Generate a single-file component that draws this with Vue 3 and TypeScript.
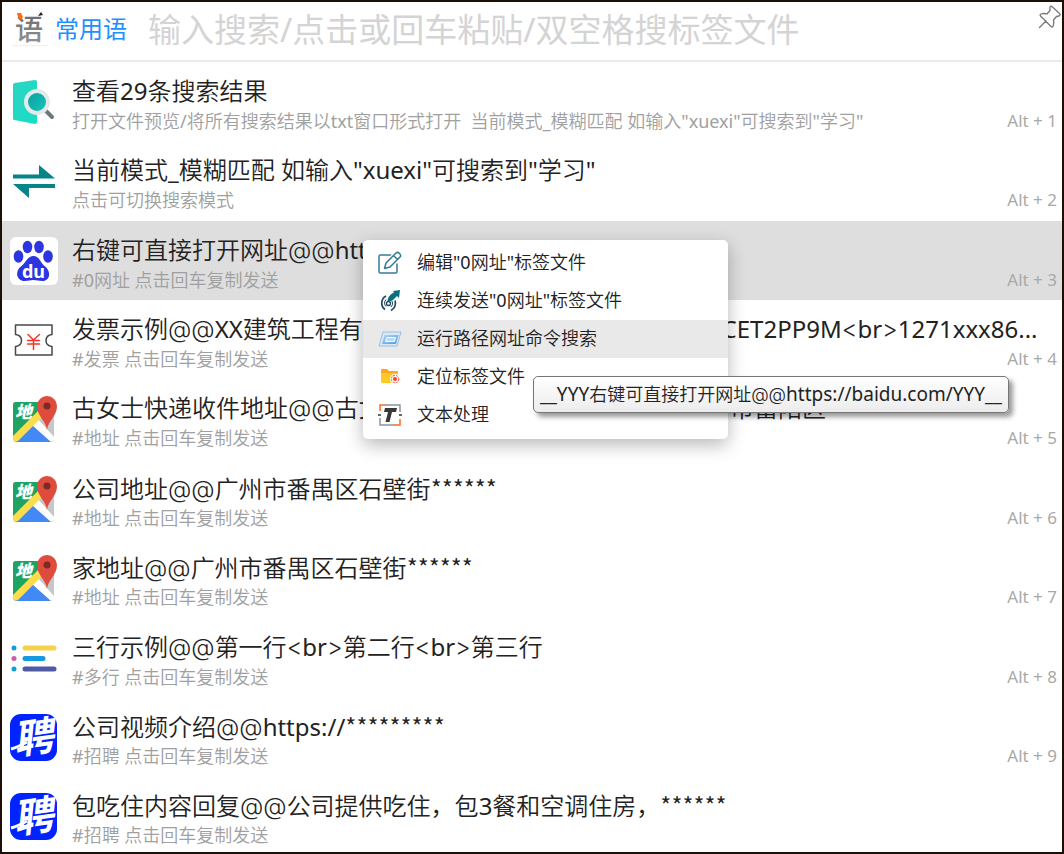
<script setup lang="ts">
import { ref } from 'vue'

type IconName = 'preview' | 'swap' | 'baidu' | 'ticket' | 'map' | 'lines' | 'hire'
interface Phrase {
  icon: IconName
  title: string
  note: string
  key?: number
}
interface Run {
  text: string
  kind: string
}

const query = ref('')
const selected = ref(2)
const activeAction = ref(2)

const phrases: Phrase[] = [
  { icon: 'preview', title: '查看29条搜索结果', note: '打开文件预览/将所有搜索结果以txt窗口形式打开\u00a0 当前模式_模糊匹配 如输入"xuexi"可搜索到"学习"', key: 1 },
  { icon: 'swap', title: '当前模式_模糊匹配 如输入"xuexi"可搜索到"学习"', note: '点击可切换搜索模式', key: 2 },
  { icon: 'baidu', title: '右键可直接打开网址@@https://baidu.com', note: '#0网址 点击回车复制发送', key: 3 },
  { icon: 'ticket', title: '发票示例@@XX建筑工程有限公司<br>税号<br>914401xxx CET2PP9M<br>1271xxx86...', note: '#发票 点击回车复制发送', key: 4 },
  { icon: 'map', title: '古女士快递收件地址@@古女士 138xxxxxxxx 地址浙江省杭州市富阳区', note: '#地址 点击回车复制发送', key: 5 },
  { icon: 'map', title: '公司地址@@广州市番禺区石壁街******', note: '#地址 点击回车复制发送', key: 6 },
  { icon: 'map', title: '家地址@@广州市番禺区石壁街******', note: '#地址 点击回车复制发送', key: 7 },
  { icon: 'lines', title: '三行示例@@第一行<br>第二行<br>第三行', note: '#多行 点击回车复制发送', key: 8 },
  { icon: 'hire', title: '公司视频介绍@@https://*********', note: '#招聘 点击回车复制发送', key: 9 },
  { icon: 'hire', title: '包吃住内容回复@@公司提供吃住，包3餐和空调住房，******', note: '#招聘 点击回车复制发送' },
]

const actions = [
  { icon: 'edit', label: '编辑"0网址"标签文件' },
  { icon: 'send', label: '连续发送"0网址"标签文件' },
  { icon: 'run', label: '运行路径网址命令搜索' },
  { icon: 'folder', label: '定位标签文件' },
  { icon: 'text', label: '文本处理' },
]

const tip = '__YYY右键可直接打开网址@@https://baidu.com/YYY__'

// Han text is set lighter than Latin; separators and masks have their own families.
function runs(text: string): Run[] {
  return text
    .split(/([@<>]+|\*+|[!-);+-;=?A-~]+)/)
    .filter((part) => part.length > 0)
    .map((part) => ({
      text: part,
      kind: /^[@<>]/.test(part) ? 'mark' : part.startsWith('*') ? 'mask' : /^[!-~]/.test(part) ? 'latin' : 'han',
    }))
}
</script>

<template>
  <main class="launcher">
    <header class="bar">
      <svg class="logo" viewBox="0 0 36 36" aria-hidden="true">
        <defs>
          <linearGradient id="ink" x1="0" y1="0" x2="0" y2="1">
            <stop offset="0" stop-color="#666" />
            <stop offset="1" stop-color="#999" />
          </linearGradient>
        </defs>
        <text x="3" y="29" class="logo-char" fill="url(#ink)">语</text>
        <path d="M5 2l4 0 2 4-2 3-3-3z" fill="#ff6a13" />
        <path d="M26 5l3-4 2 3z" fill="#222" />
        <path d="M0 34.500h36" stroke="#eee" />
      </svg>
      <label class="scope" for="query">常用语</label>
      <input id="query" v-model="query" class="query" type="text" placeholder="输入搜索/点击或回车粘贴/双空格搜标签文件" />
      <button class="pin" type="button" aria-label="固定窗口">
        <svg viewBox="0 0 24 24" fill="none" stroke="#777" stroke-width="1.300" stroke-linejoin="round" stroke-linecap="round">
          <path d="M12 2q1-1.500 2.500 0l7 6.500q1.500 1.500-.5 2.500l-2.500.5-3 3.500q1 3.500-.500 6.500-1 1-2 0L2.500 11q-1-1.500.5-2 3-1 6 0l3-3.500zM8 16l-6.500 6.500" />
        </svg>
      </button>
    </header>

    <ul class="list">
      <li v-for="(p, i) in phrases" :key="i" class="item">
        <button type="button" class="row" :class="{ selected: i === selected }" @click="selected = i">
          <svg class="icon" viewBox="0 0 48 48" aria-hidden="true">
            <g v-if="p.icon === 'preview'">
              <defs>
                <linearGradient id="door" x1="0" y1="0" x2="1" y2="1">
                  <stop offset="0" stop-color="#2ed3c4" />
                  <stop offset="1" stop-color="#15dfc2" />
                </linearGradient>
                <linearGradient id="lens" x1="0" y1="0" x2="1" y2="1">
                  <stop offset="0" stop-color="#0a9c9c" />
                  <stop offset="1" stop-color="#18c9c0" />
                </linearGradient>
              </defs>
              <path d="M3 7q0-1.500 1.500-2L25 2q2 0 2 2v40q0 2-2 2L4.500 42q-1.500 0-1.500-1.500z" fill="url(#door)" />
              <path d="M35 32l7 7" stroke="#687b7b" stroke-width="4" stroke-linecap="round" />
              <circle cx="27" cy="24" r="11" fill="url(#lens)" stroke="#e4e9ea" stroke-width="4" />
            </g>
            <g v-else-if="p.icon === 'swap'" fill="#078488">
              <path d="M3 17.500h26V8L45 21.500H3z" />
              <path d="M3 27h42v4H19v10z" />
            </g>
            <g v-else-if="p.icon === 'baidu'">
              <rect width="48" height="48" rx="6" fill="#fff" />
              <g fill="#2b35e0">
                <ellipse cx="17.500" cy="10" rx="4.800" ry="6.200" />
                <ellipse cx="29" cy="10" rx="4.800" ry="6.200" />
                <ellipse cx="8.500" cy="19.500" rx="4.800" ry="6.200" />
                <ellipse cx="38" cy="19.500" rx="4.800" ry="6.200" />
                <path d="M23.500 19c6 0 7 7 11 10 7 5 6 15-2 15-4 0-6-1-9-1s-5 1-9 1c-8 0-10-10-3-15 4-3 6-10 12-10z" />
              </g>
              <text x="23.500" y="40.500" class="du" fill="#fff" text-anchor="middle">du</text>
            </g>
            <g v-else-if="p.icon === 'ticket'" fill="none" stroke-linecap="round">
              <path d="M5.500 9h36.500v9.500c-8 1-8 11 0 12V39H5.500v-8.500c8-1 8-11 0-12z" stroke="#484848" stroke-width="1.500" stroke-linejoin="round" />
              <path d="M18 18.500l5.500 5.500 6-5.500M23.500 24v9.500M17.500 24.500h12M17.500 28h12" stroke="#f8342b" stroke-width="1.500" />
            </g>
            <g v-else-if="p.icon === 'map'">
              <rect x="3" y="7" width="41" height="40" rx="3" fill="#c5c7c8" />
              <path d="M6 7h36L4 45q-1-1-1-3V10q0-3 3-3z" fill="#1ea362" />
              <path d="M5 46L24 28l18 19H7z" fill="#4389f5" />
              <path d="M22 30l6-6 16 17v4q-1 2-3 2z" fill="#fff" />
              <path d="M29 25l4-4 11 12v9z" fill="#c5c7c8" />
              <path d="M3 41L31 13l5 5L8 46q-5 1-5-3z" fill="#fbdc4b" />
              <text x="5" y="23" class="di" fill="#fff">地</text>
              <path d="M37 35c-1-9-10-14-10-24a10 10 0 0 1 20 0c0 10-9 15-10 24z" fill="#df4b3d" />
              <circle cx="37" cy="11" r="3.500" fill="#7d2a25" />
            </g>
            <g v-else-if="p.icon === 'lines'" stroke-width="5" stroke-linecap="round">
              <path d="M15 14h29" stroke="#f5d348" />
              <path d="M15 24.500h18" stroke="#169ade" />
              <path d="M15 35h29" stroke="#5059a3" />
              <g stroke="none">
                <circle cx="4" cy="14" r="2.500" fill="#169ade" />
                <circle cx="4" cy="24.500" r="2.500" fill="#cf5ba8" />
                <circle cx="4" cy="35" r="2.500" fill="#169ade" />
              </g>
            </g>
            <g v-else>
              <rect y="1" width="47" height="47" rx="11" fill="#0023ff" />
              <text x="23" y="39" class="hire-char" fill="#fff" text-anchor="middle" transform="rotate(-8 24 24)">聘</text>
              <path d="M1 36Q8 34 17 29" stroke="#fff" stroke-width="3" fill="none" />
            </g>
          </svg>
          <span class="body">
            <span class="title"><span v-for="(r, n) in runs(p.title)" :key="n" :class="r.kind">{{ r.text }}</span></span>
            <span class="meta">
              <span class="note"><span v-for="(r, n) in runs(p.note)" :key="n" :class="r.kind">{{ r.text }}</span></span>
              <kbd v-if="p.key" class="key">Alt + {{ p.key }}</kbd>
            </span>
          </span>
        </button>
      </li>
    </ul>

    <div class="menu" role="menu">
      <button
        v-for="(a, i) in actions"
        :key="a.icon"
        type="button"
        role="menuitem"
        class="action"
        :class="{ active: i === activeAction }"
        @mouseenter="activeAction = i"
      >
        <svg class="glyph" viewBox="0 0 24 24" fill="none" aria-hidden="true">
          <g v-if="a.icon === 'edit'" stroke="#357b98" stroke-width="1.500" stroke-linejoin="round" stroke-linecap="round">
            <path d="M12.500 4H2.500Q1 4 1 5.500v15Q1 22 2.500 22h15q1.500 0 1.500-1.500V13" />
            <path d="M6.500 17.500L8 12l10-10q1.500-1.500 3.500.500t.5 3.500L12 16zM15.500 4.500l4 4" />
          </g>
          <g v-else-if="a.icon === 'send'">
            <path d="M8 7a8 8 0 0 0-1 13.500M13 21.500a8 8 0 0 0 4-10" stroke="#23485e" stroke-width="1.700" />
            <path d="M8 10.500a5 5 0 0 0 0 7M13 18a5 5 0 0 0 1-6" stroke="#23485e" />
            <circle cx="10.500" cy="14.500" r="2" stroke="#23485e" stroke-width="1.300" />
            <path d="M9.500 12Q10 6 16 3.500L15 2l7-1-1 8-2-2q-3 4-8 6z" fill="#087180" />
          </g>
          <g v-else-if="a.icon === 'run'">
            <defs>
              <linearGradient id="pane" x1="0" y1="0" x2="1" y2="1">
                <stop offset="0" stop-color="#b4d8f4" />
                <stop offset="1" stop-color="#4a9ce0" />
              </linearGradient>
            </defs>
            <path d="M5 5h18l-4 14H1z" fill="#d7e8f7" stroke="#9fbedb" />
            <path d="M6.500 8h14l-2.500 9H4z" fill="url(#pane)" />
            <path d="M9 10.500h8.500l-1 4H7.500z" fill="#b8daf7" stroke="#fff" />
          </g>
          <g v-else-if="a.icon === 'folder'">
            <path d="M3 5q0-1 1-1h5l2 2h8q1 0 1 1v10H3z" fill="#ffa51f" />
            <path d="M3 8h17v9q0 1-1 1H4q-1 0-1-1z" fill="#ffca28" />
            <circle cx="17" cy="14" r="5" fill="#fff" />
            <circle cx="17" cy="14" r="3.700" stroke="#ff5130" stroke-dasharray="2 1" />
            <circle cx="17" cy="14" r="2" fill="#ff4020" />
          </g>
          <g v-else stroke-width="1.500">
            <path d="M8 2H2v6M22 16v6h-6" stroke="#ff6a1f" />
            <path d="M8 2h14v7M2 15v7h14" stroke="#8995a3" />
            <path d="M0 12h3M21 12h3" stroke="#333" />
            <path d="M7 5h12l-1 4h-4l-2.500 10h-4L10 9H6z" fill="#383838" />
          </g>
        </svg>
        <span class="label"><span v-for="(r, n) in runs(a.label)" :key="n" :class="r.kind">{{ r.text }}</span></span>
      </button>
    </div>

    <div class="tip" role="tooltip"><span v-for="(r, n) in runs(tip)" :key="n" :class="r.kind">{{ r.text }}</span></div>
  </main>
</template>

<style scoped>
.launcher {
  position: relative;
  box-sizing: border-box;
  height: 100vh;
  display: flex;
  flex-direction: column;
  overflow: hidden;
  border: 2px solid #1e0f05;
  background: #fff;
  color: #222;
  font-family: "Noto Sans", "Noto Sans CJK SC", sans-serif;
}
button {
  border: 0;
  padding: 0;
  background: none;
  color: inherit;
  font: inherit;
  text-align: left;
}
.bar {
  flex: none;
  display: flex;
  align-items: center;
  height: 54px;
  padding: 0 0 4px 10px;
  border-bottom: 2px solid #ebebeb;
}
.logo {
  flex: none;
  width: 36px;
  height: 36px;
  overflow: visible;
}
.logo-char {
  font-size: 28px;
  font-weight: 500;
}
.scope {
  margin-left: 7px;
  font-size: 24px;
  line-height: 36px;
  color: #1e8fff;
  white-space: nowrap;
}
.query {
  flex: 1;
  min-width: 0;
  height: 50px;
  margin-left: 21px;
  padding: 0;
  border: 0;
  outline: 0;
  background: none;
  color: #222;
  font-family: inherit;
  font-size: 33px;
}
.query::placeholder {
  color: #d4d4d4;
  opacity: 1;
}
.pin {
  align-self: flex-start;
  width: 24px;
  height: 24px;
  margin-top: 3px;
}
.pin svg {
  display: block;
}
.list {
  flex: 1;
  min-height: 0;
  display: flex;
  flex-direction: column;
  margin: 0 0 -4px;
  padding: 0;
  list-style: none;
}
.item {
  flex: 1;
  min-height: 0;
  display: flex;
}
.row {
  flex: 1;
  min-width: 0;
  display: flex;
  align-items: center;
  gap: 14px;
  padding: 0 5px 0 8px;
}
.row.selected {
  background: #dedede;
}
.icon {
  flex: none;
  width: 48px;
  height: 48px;
  overflow: visible;
}
.du {
  font: 700 18px "Noto Sans", sans-serif;
}
.di {
  font: italic 900 17px "Noto Sans CJK SC", sans-serif;
}
.hire-char {
  font: italic 700 40px "Noto Sans CJK SC", sans-serif;
}
.body {
  flex: 1;
  min-width: 0;
  padding-top: 4px;
}
.title {
  display: block;
  overflow: hidden;
  height: 34px;
  font-size: 24px;
  font-weight: 350;
  line-height: 34px;
  white-space: nowrap;
}
.latin {
  font-weight: 400;
}
.mark {
  font-family: Inter, sans-serif;
}
.mask {
  font-family: "Noto Sans CJK SC", sans-serif;
}
.meta {
  display: flex;
  justify-content: space-between;
  align-items: center;
  font-size: 18px;
  line-height: 26px;
  color: #a0a0a0;
  font-weight: 350;
  white-space: nowrap;
}
.key {
  font-family: inherit;
  font-size: 17px;
  font-weight: 400;
  line-height: 24px;
  color: #a9a9a9;
}
.menu {
  position: absolute;
  left: 361px;
  top: 238px;
  box-sizing: border-box;
  width: 365px;
  padding: 4px 0 5px;
  border-radius: 5px;
  background: #fff;
  box-shadow: 0 6px 18px rgba(0, 0, 0, 0.28);
}
.action {
  display: flex;
  align-items: center;
  gap: 15px;
  width: 100%;
  height: 38px;
  padding-left: 15px;
  font-size: 18px;
  font-weight: 350;
  line-height: 24px;
}
.label {
  padding-bottom: 3px;
}
.action.active {
  background: #e9e9e9;
}
.glyph {
  flex: none;
  width: 24px;
  height: 24px;
}
.tip {
  position: absolute;
  left: 531px;
  top: 374px;
  height: 35px;
  padding: 0 6px;
  border: 1px solid #767676;
  border-radius: 5px;
  background: linear-gradient(#fff, #ececee);
  box-shadow: 4px 4px 5px rgba(0, 0, 0, 0.4);
  font-size: 18px;
  font-weight: 350;
  line-height: 35px;
  white-space: nowrap;
}
.tip .latin {
  font-size: 19px;
}
</style>

<style>
body {
  margin: 0;
}
</style>
